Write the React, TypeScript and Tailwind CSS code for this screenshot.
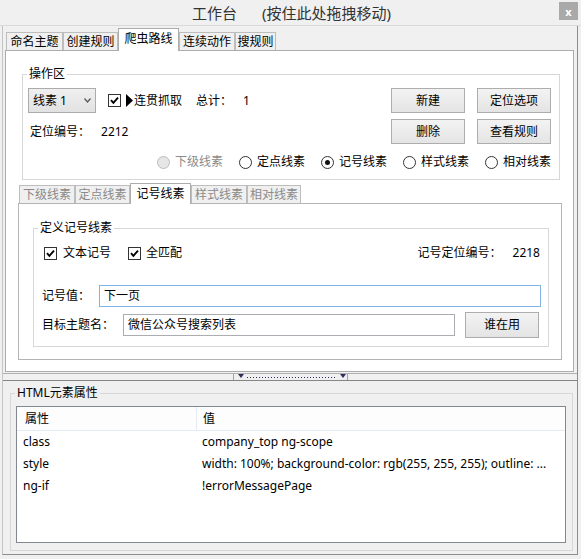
import React from 'react'

function Checkbox() {
  return (
    <span className="flex h-[13px] w-[13px] shrink-0 items-center justify-center border border-[#333] bg-white">
      <svg width="11" height="11" viewBox="0 0 11 11">
        <path d="M2 5.2 L4.4 7.8 L9 2.6" fill="none" stroke="#000" strokeWidth="1.9" />
      </svg>
    </span>
  )
}

function Radio({ checked, disabled }: { checked?: boolean; disabled?: boolean }) {
  return (
    <span
      className={
        disabled
          ? 'flex h-[13px] w-[13px] shrink-0 items-center justify-center rounded-full border border-[#bcbcbc] bg-[#e6e6e6]'
          : 'flex h-[13px] w-[13px] shrink-0 items-center justify-center rounded-full border border-[#333] bg-white'
      }
    >
      {checked && <span className="h-[5px] w-[5px] rounded-full bg-[#111]" />}
    </span>
  )
}

function Btn({ children, className = '' }: { children: React.ReactNode; className?: string }) {
  return (
    <div
      className={`flex w-[74px] items-center justify-center border border-[#adadad] bg-linear-to-b from-[#f3f3f3] to-[#e4e4e4] ${className}`}
    >
      {children}
    </div>
  )
}

function Tab({ label, active, className = '' }: { label: string; active?: boolean; className?: string }) {
  return (
    <div
      className={
        active
          ? `relative z-10 -mb-px flex items-center justify-center border border-b-0 border-[#acacac] bg-white ${className}`
          : `flex items-center justify-center border border-b-0 border-[#bdbdbd] bg-[#f0f0f0] ${className}`
      }
    >
      {label}
    </div>
  )
}

function DownTri() {
  return (
    <svg width="6" height="4" viewBox="0 0 6 4" className="shrink-0">
      <polygon points="0,0 6,0 3,4" fill="#2e2e5e" />
    </svg>
  )
}

const radios = [
  { label: '下级线素', disabled: true },
  { label: '定点线素' },
  { label: '记号线素', checked: true },
  { label: '样式线素' },
  { label: '相对线素' },
]

const attrs = [
  { name: 'class', value: 'company_top ng-scope' },
  { name: 'style', value: 'width: 100%; background-color: rgb(255, 255, 255); outline: ...' },
  { name: 'ng-if', value: '!errorMessagePage' },
]

export default function App() {
  return (
    <div className="h-[559px] w-[581px] overflow-hidden bg-[#f0f0f0] font-['Noto_Sans','Noto_Sans_CJK_SC',sans-serif] text-[12px] leading-[16px] text-black">
      {/* title bar */}
      <div className="flex h-[25px] pl-[24px] pr-[3px]">
        <div className="flex flex-1 items-center justify-center text-[15px] leading-[20px] text-[#333]">
          <span>工作台</span>
          <span className="ml-[25px]">(按住此处拖拽移动)</span>
        </div>
        <div className="mt-[2px] flex h-[18px] w-[19px] items-center justify-center bg-[#a9a9a9] text-[11px] font-bold leading-none text-white">
          x
        </div>
      </div>

      <div className="border-t border-[#d9d9d9]">
        <div className="ml-[2px] flex h-[529px] w-[576px] flex-col border-x border-b border-l-[#c4c4c4] border-r-[#8c8c8c] border-b-[#8c8c8c]">
          {/* main tabs */}
          <div className="flex h-[24px] items-end pl-[3px]">
            <Tab label="命名主题" className="h-[18px] w-[57px]" />
            <Tab label="创建规则" className="h-[18px] w-[55px]" />
            <Tab label="爬虫路线" active className="h-[23px] w-[61px] pb-[3px]" />
            <Tab label="连续动作" className="h-[18px] w-[56px]" />
            <Tab label="搜规则" className="h-[18px] w-[41px]" />
          </div>

          <div className="ml-[2px] h-[322px] w-[569px] shrink-0 border border-[#acacac] bg-white">
            <fieldset className="ml-[16px] mt-[15px] w-[538px] border border-[#d7d7d7]">
              <legend className="ml-[4px] px-[2px] leading-[16px]">操作区</legend>
              <div className="pb-[9px] pl-[5px] pr-[8px] pt-[6px]">
                <div className="flex">
                  <div className="flex-1">
                    <div className="flex h-[25px] items-center">
                      <div className="flex h-[25px] w-[68px] items-center justify-between border border-[#acacac] bg-linear-to-b from-[#efefef] to-[#e2e2e2] pl-[4px] pr-[4px]">
                        <span>线素 1</span>
                        <svg width="7" height="5" viewBox="0 0 7 5">
                          <polyline points="0.5,0.5 3.5,4 6.5,0.5" fill="none" stroke="#555" strokeWidth="1.2" />
                        </svg>
                      </div>
                      <span className="ml-[12px]">
                        <Checkbox />
                      </span>
                      <svg width="7" height="13" viewBox="0 0 7 13" className="ml-[5px]">
                        <polygon points="0,0 7,6.5 0,13" fill="#000" />
                      </svg>
                      <span className="ml-[1px]">连贯抓取</span>
                      <span className="ml-[14px]">总计：</span>
                      <span className="ml-[11px]">1</span>
                    </div>
                    <div className="mt-[6px] flex h-[25px] items-center pl-[2px]">
                      <span>定位编号：</span>
                      <span className="ml-[11px]">2212</span>
                    </div>
                  </div>
                  <div className="grid grid-cols-2 gap-x-[12px] gap-y-[6px]">
                    <Btn className="h-[25px]">新建</Btn>
                    <Btn className="h-[25px]">定位选项</Btn>
                    <Btn className="h-[25px]">删除</Btn>
                    <Btn className="h-[25px]">查看规则</Btn>
                  </div>
                </div>
                <div className="mt-[10px] flex h-[16px] items-center justify-end gap-[16px]">
                  {radios.map((r) => (
                    <div key={r.label} className="flex items-center">
                      <Radio checked={r.checked} disabled={r.disabled} />
                      <span className={r.disabled ? 'ml-[5px] text-[#8a8a8a]' : 'ml-[5px]'}>{r.label}</span>
                    </div>
                  ))}
                </div>
              </div>
            </fieldset>

            {/* inner tabs */}
            <div className="ml-[13px] mt-[3px] flex h-[20px] items-end text-[#8a8a8a]">
              <Tab label="下级线素" className="h-[18px] w-[56px]" />
              <Tab label="定点线素" className="h-[18px] w-[55px]" />
              <Tab label="记号线素" active className="h-[21px] w-[61px] text-black" />
              <Tab label="样式线素" className="h-[18px] w-[56px]" />
              <Tab label="相对线素" className="h-[18px] w-[54px]" />
            </div>
            <div className="ml-[12px] h-[157px] w-[544px] border border-[#b4b4b4] bg-white">
              <fieldset className="ml-[14px] mt-[16px] w-[516px] border border-[#d7d7d7]">
                <legend className="ml-[4px] px-[2px] leading-[16px]">定义记号线素</legend>
                <div className="pb-[8px] pl-[8px] pr-[7px] pt-[9px]">
                  <div className="flex h-[16px] items-center pl-[2px]">
                    <Checkbox />
                    <span className="ml-[6px]">文本记号</span>
                    <span className="ml-[17px]">
                      <Checkbox />
                    </span>
                    <span className="ml-[5px]">全匹配</span>
                    <span className="ml-auto">记号定位编号：</span>
                    <span className="ml-[11px] mr-[1px]">2218</span>
                  </div>
                  <div className="mt-[24px] flex h-[22px] items-center">
                    <span className="w-[48px] shrink-0">记号值：</span>
                    <div className="ml-[9px] flex h-[22px] w-[442px] shrink-0 items-center border border-[#7eb4ea] bg-white pl-[4px]">
                      下一页
                    </div>
                  </div>
                  <div className="mt-[5px] flex h-[26px] items-center">
                    <span className="w-[72px] shrink-0">目标主题名：</span>
                    <div className="ml-[9px] flex h-[22px] w-[332px] shrink-0 items-center border border-[#abadb3] bg-white pl-[4px]">
                      微信公众号搜索列表
                    </div>
                    <Btn className="ml-[10px] h-[26px]">谁在用</Btn>
                  </div>
                </div>
              </fieldset>
            </div>
          </div>

          {/* splitter */}
          <div className="mt-[1px] flex h-[7px] shrink-0 items-start justify-center border-t border-[#b0b0b0]">
            <span className="h-[6px] w-px bg-[#a0a0a0]" />
            <span className="ml-[4px]">
              <DownTri />
            </span>
            <span className="ml-[3px] mt-[3px] h-px w-[89px] bg-[repeating-linear-gradient(90deg,#2e2e5e_0_1px,transparent_1px_3px)]" />
            <span className="ml-[4px]">
              <DownTri />
            </span>
            <span className="ml-[1px] h-[6px] w-px bg-[#a0a0a0]" />
          </div>

          {/* bottom section */}
          <div className="flex-1 border-t border-[#858585]">
            <fieldset className="ml-[7px] mt-[4px] w-[563px] border border-[#d7d7d7]">
              <legend className="ml-[4px] px-[2px] leading-[16px]">HTML元素属性</legend>
              <div className="pb-[7px] pl-[5px] pt-[5px]">
                <div className="h-[137px] w-[550px] overflow-hidden border border-[#828790] bg-white">
                  <div className="flex h-[24px] items-center border-b border-[#e3ebf5] bg-[#fdfdfe]">
                    <div className="flex h-full w-[180px] items-center border-r border-[#e3ebf5] pl-[8px]">属性</div>
                    <div className="pl-[6px]">值</div>
                  </div>
                  {attrs.map((a) => (
                    <div key={a.name} className="flex h-[22px] items-center whitespace-nowrap">
                      <div className="w-[180px] shrink-0 pl-[6px]">{a.name}</div>
                      <div className="overflow-hidden pl-[5px]">{a.value}</div>
                    </div>
                  ))}
                </div>
              </div>
            </fieldset>
          </div>
        </div>
      </div>
    </div>
  )
}
